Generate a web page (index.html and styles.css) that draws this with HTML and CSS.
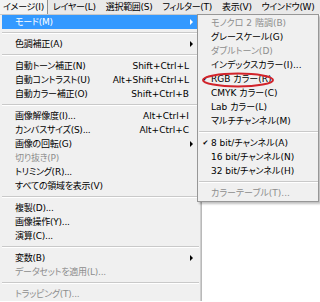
FILE: index.html
```html
<!DOCTYPE html>
<html lang="ja">

<head>
    <meta charset="UTF-8">
    <meta name="viewport" content="width=device-width, initial-scale=1.0">
    <title>イメージメニュー</title>
    <link rel="stylesheet" href="styles.css">
</head>

<body>
    <div class="menubar">
        <span class="menubar-item active">イメージ(I)</span>
        <span class="menubar-item">レイヤー(L)</span>
        <span class="menubar-item">選択範囲(S)</span>
        <span class="menubar-item">フィルター(T)</span>
        <span class="menubar-item">表示(V)</span>
        <span class="menubar-item">ウインドウ(W)</span>
    </div>

    <div class="menus">
        <ul class="menu main-menu">
            <li class="menu-item selected"><span>モード(M)</span><span class="arrow"></span></li>
            <li class="separator"></li>
            <li class="menu-item"><span>色調補正(A)</span><span class="arrow"></span></li>
            <li class="separator"></li>
            <li class="menu-item"><span>自動トーン補正(N)</span><span class="shortcut">Shift+Ctrl+L</span></li>
            <li class="menu-item"><span>自動コントラスト(U)</span><span class="shortcut">Alt+Shift+Ctrl+L</span></li>
            <li class="menu-item"><span>自動カラー補正(O)</span><span class="shortcut">Shift+Ctrl+B</span></li>
            <li class="separator"></li>
            <li class="menu-item"><span>画像解像度(I)...</span><span class="shortcut">Alt+Ctrl+I</span></li>
            <li class="menu-item"><span>カンバスサイズ(S)...</span><span class="shortcut">Alt+Ctrl+C</span></li>
            <li class="menu-item"><span>画像の回転(G)</span><span class="arrow"></span></li>
            <li class="menu-item disabled"><span>切り抜き(P)</span></li>
            <li class="menu-item"><span>トリミング(R)...</span></li>
            <li class="menu-item"><span>すべての領域を表示(V)</span></li>
            <li class="separator"></li>
            <li class="menu-item"><span>複製(D)...</span></li>
            <li class="menu-item"><span>画像操作(Y)...</span></li>
            <li class="menu-item"><span>演算(C)...</span></li>
            <li class="separator"></li>
            <li class="menu-item"><span>変数(B)</span><span class="arrow"></span></li>
            <li class="menu-item disabled"><span>データセットを適用(L)...</span></li>
            <li class="separator"></li>
            <li class="menu-item disabled"><span>トラッピング(T)...</span></li>
        </ul>

        <ul class="menu submenu">
            <li class="menu-item disabled"><span class="check"></span><span>モノクロ 2 階調(B)</span></li>
            <li class="menu-item"><span class="check"></span><span>グレースケール(G)</span></li>
            <li class="menu-item disabled"><span class="check"></span><span>ダブルトーン(D)</span></li>
            <li class="menu-item"><span class="check"></span><span>インデックスカラー(I)...</span></li>
            <li class="menu-item"><span class="check">✔</span><span>RGB カラー(R)</span></li>
            <li class="menu-item"><span class="check"></span><span>CMYK カラー(C)</span></li>
            <li class="menu-item"><span class="check"></span><span>Lab カラー(L)</span></li>
            <li class="menu-item"><span class="check"></span><span>マルチチャンネル(M)</span></li>
            <li class="separator"></li>
            <li class="menu-item"><span class="check">✔</span><span>8 bit/チャンネル(A)</span></li>
            <li class="menu-item"><span class="check"></span><span>16 bit/チャンネル(N)</span></li>
            <li class="menu-item"><span class="check"></span><span>32 bit/チャンネル(H)</span></li>
            <li class="separator"></li>
            <li class="menu-item disabled"><span class="check"></span><span>カラーテーブル(T)...</span></li>
        </ul>

        <svg class="mark" width="76" height="18" viewBox="0 0 76 18">
            <ellipse cx="38" cy="9" rx="35" ry="6.5" fill="none" stroke="#d2232a" stroke-width="2" />
        </svg>
    </div>
</body>

</html>
```

FILE: styles.css
```css
body {
    margin: 0;
    background-color: #fff;
    font-family: "DejaVu Sans", "Noto Sans CJK JP", sans-serif;
    font-size: 9px;
    font-feature-settings: "palt";
    color: #000;
    height: 302px;
    overflow: hidden;
}

.menubar {
    display: flex;
    height: 14px;
    background-color: #e9e9e9;
}

.menubar-item {
    line-height: 14px;
    padding: 0 5px;
    letter-spacing: -0.3px;
    white-space: nowrap;
}

.menubar-item.active {
    padding: 0 3px;
    background-color: #f3f3f3;
    border-right: 1px solid #8e8e8e;
}

.menus {
    position: relative;
}

.menu {
    list-style: none;
    margin: 0;
    padding: 0;
    background-color: #f0f0f0;
}

.main-menu {
    width: 200px;
    border-top: 1px solid #c8c8c8;
    border-right: 1px solid #cfcfcf;
    box-shadow: 1px 0 0 #b9b9b9;
}

.menu-item {
    display: flex;
    align-items: center;
    height: 14px;
    line-height: 14px;
    white-space: nowrap;
}

.main-menu .menu-item {
    margin: 0 2px;
    padding: 0 5px 0 13px;
    letter-spacing: -0.25px;
}

.menu-item.selected {
    background-color: #3399ff;
    color: #fff;
}

.menu-item.disabled {
    color: #8d8d8d;
}

.shortcut {
    margin-left: auto;
    margin-right: 4px;
    letter-spacing: 0;
}

.arrow {
    margin-left: auto;
    width: 0;
    height: 0;
    border-left: 3px solid #000;
    border-top: 3px solid transparent;
    border-bottom: 3px solid transparent;
}

.selected .arrow {
    border-left-color: #fff;
}

.separator {
    height: 1px;
    margin: 3px 1px 3px 2px;
    background-color: #c9c9c9;
    border-bottom: 1px solid #fff;
}

.submenu {
    position: absolute;
    left: 197px;
    top: 0;
    width: 122px;
    box-sizing: border-box;
    padding: 1px 0;
    border: 1px solid #979797;
    box-shadow: 2px 2px 2px rgba(0, 0, 0, 0.25);
}

.submenu .menu-item {
    margin: 0 1px;
    padding-left: 1px;
}

.submenu .separator {
    margin: 3px 0 3px 1px;
}

.check {
    width: 11px;
    font-size: 7px;
    text-align: center;
}

.mark {
    position: absolute;
    left: 200px;
    top: 57px;
}
```
